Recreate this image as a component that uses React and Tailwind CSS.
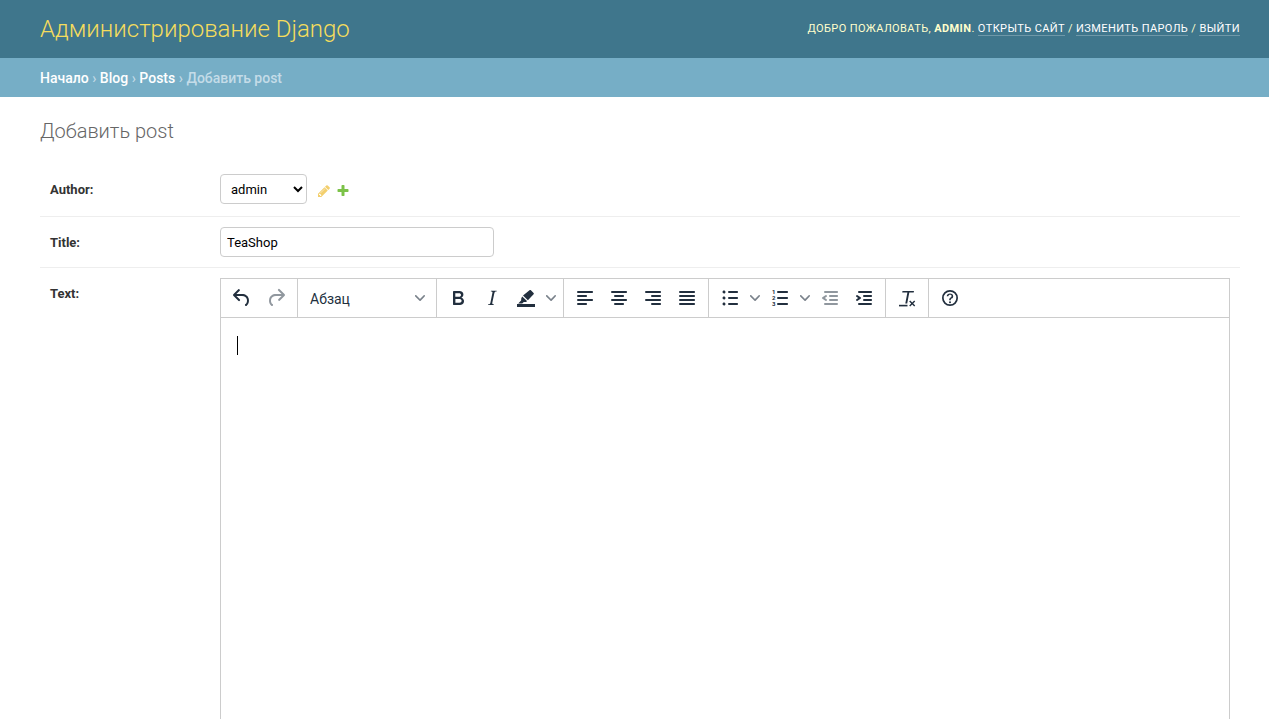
import React from "react";

const Icon = ({ d, className = "", children }) => (
  <svg width="24" height="24" viewBox="0 0 24 24" className={className} fill="currentColor">
    {d && <path d={d} />}
    {children}
  </svg>
);

const Chevron = ({ className = "" }) => (
  <svg width="10" height="10" viewBox="0 0 10 10" className={className} fill="currentColor">
    <path d="M8.7 2.2c.3-.3.8-.3 1 0 .4.4.4.9 0 1.2L5.7 7.8c-.3.3-.9.3-1.2 0L.2 3.4a.8.8 0 0 1 0-1.2c.3-.3.8-.3 1.1 0L5 6l3.7-3.8Z" />
  </svg>
);

const paths = {
  undo: "M6.4 8H12c3.7 0 6.2 2 6.8 5.1.6 2.7-.4 5.6-2.3 6.8a1 1 0 0 1-1-1.8c1.1-.6 1.8-2.7 1.4-4.6-.5-2.1-2.1-3.5-4.9-3.5H6.4l3.3 3.3a1 1 0 1 1-1.4 1.4l-5-5a1 1 0 0 1 0-1.4l5-5a1 1 0 0 1 1.4 1.4L6.4 8Z",
  redo: "M17.6 10H12c-2.8 0-4.4 1.4-4.9 3.5-.4 2 .3 4 1.4 4.6a1 1 0 1 1-1 1.8c-2-1.2-2.9-4.1-2.3-6.8.6-3 3-5.1 6.8-5.1h5.6l-3.3-3.3a1 1 0 1 1 1.4-1.4l5 5a1 1 0 0 1 0 1.4l-5 5a1 1 0 0 1-1.4-1.4l3.3-3.3Z",
  bold: "M7.8 19c-.3 0-.5 0-.6-.2l-.2-.5V5.7c0-.2 0-.4.2-.5l.6-.2h5c1.5 0 2.7.3 3.5 1 .7.6 1.1 1.4 1.1 2.5a3 3 0 0 1-.6 1.9c-.4.6-1 1-1.6 1.2.4.1.9.3 1.3.6s.8.7 1 1.2c.4.4.5 1 .5 1.6 0 1.3-.4 2.3-1.3 3-.8.7-2.1 1-3.8 1H7.8Zm5-8.3c.6 0 1.2-.1 1.6-.5.4-.3.6-.7.6-1.3 0-1.1-.8-1.7-2.3-1.7H9.3v3.5h3.4Zm.5 6c.7 0 1.3-.1 1.7-.4.4-.4.6-.9.6-1.5s-.2-1-.7-1.4c-.4-.3-1-.4-2-.4H9.4v3.8h4Z",
  italic: "m16.7 4.7-.1.9h-.3c-.6 0-1 0-1.4.3-.3.3-.4.6-.5 1.1l-2.1 9.8v.6c0 .5.4.8 1.4.8h.2l-.2.8H8l.2-.8h.2c1.1 0 1.8-.5 2-1.5l2-9.8.1-.5c0-.6-.4-.8-1.4-.8h-.3l.2-.9h5.8Z",
  left: "M5 5h14c.6 0 1 .4 1 1s-.4 1-1 1H5a1 1 0 1 1 0-2Zm0 4h8c.6 0 1 .4 1 1s-.4 1-1 1H5a1 1 0 1 1 0-2Zm0 8h8c.6 0 1 .4 1 1s-.4 1-1 1H5a1 1 0 0 1 0-2Zm0-4h14c.6 0 1 .4 1 1s-.4 1-1 1H5a1 1 0 0 1 0-2Z",
  center: "M5 5h14c.6 0 1 .4 1 1s-.4 1-1 1H5a1 1 0 1 1 0-2Zm3 4h8c.6 0 1 .4 1 1s-.4 1-1 1H8a1 1 0 1 1 0-2Zm0 8h8c.6 0 1 .4 1 1s-.4 1-1 1H8a1 1 0 0 1 0-2Zm-3-4h14c.6 0 1 .4 1 1s-.4 1-1 1H5a1 1 0 0 1 0-2Z",
  right: "M5 5h14c.6 0 1 .4 1 1s-.4 1-1 1H5a1 1 0 1 1 0-2Zm6 4h8c.6 0 1 .4 1 1s-.4 1-1 1h-8a1 1 0 0 1 0-2Zm0 8h8c.6 0 1 .4 1 1s-.4 1-1 1h-8a1 1 0 0 1 0-2Zm-6-4h14c.6 0 1 .4 1 1s-.4 1-1 1H5a1 1 0 0 1 0-2Z",
  justify: "M5 5h14c.6 0 1 .4 1 1s-.4 1-1 1H5a1 1 0 1 1 0-2Zm0 4h14c.6 0 1 .4 1 1s-.4 1-1 1H5a1 1 0 1 1 0-2Zm0 4h14c.6 0 1 .4 1 1s-.4 1-1 1H5a1 1 0 0 1 0-2Zm0 4h14c.6 0 1 .4 1 1s-.4 1-1 1H5a1 1 0 0 1 0-2Z",
  bullets: "M11 5h8c.6 0 1 .4 1 1s-.4 1-1 1h-8a1 1 0 0 1 0-2Zm0 6h8c.6 0 1 .4 1 1s-.4 1-1 1h-8a1 1 0 0 1 0-2Zm0 6h8c.6 0 1 .4 1 1s-.4 1-1 1h-8a1 1 0 0 1 0-2ZM4.5 6c0-.4.1-.8.4-1 .3-.4.7-.5 1.1-.5.4 0 .8.1 1 .4.4.3.5.7.5 1.1 0 .4-.1.8-.4 1-.3.4-.7.5-1.1.5-.4 0-.8-.1-1-.4-.4-.3-.5-.7-.5-1.1Zm0 6c0-.4.1-.8.4-1 .3-.4.7-.5 1.1-.5.4 0 .8.1 1 .4.4.3.5.7.5 1.1 0 .4-.1.8-.4 1-.3.4-.7.5-1.1.5-.4 0-.8-.1-1-.4-.4-.3-.5-.7-.5-1.1Zm0 6c0-.4.1-.8.4-1 .3-.4.7-.5 1.1-.5.4 0 .8.1 1 .4.4.3.5.7.5 1.1 0 .4-.1.8-.4 1-.3.4-.7.5-1.1.5-.4 0-.8-.1-1-.4-.4-.3-.5-.7-.5-1.1Z",
  numberLines: "M10 5h9c.6 0 1 .4 1 1s-.4 1-1 1h-9a1 1 0 0 1 0-2Zm0 6h9c.6 0 1 .4 1 1s-.4 1-1 1h-9a1 1 0 0 1 0-2Zm0 6h9c.6 0 1 .4 1 1s-.4 1-1 1h-9a1 1 0 0 1 0-2Z",
  outdent: "M7 5h12c.6 0 1 .4 1 1s-.4 1-1 1H7a1 1 0 1 1 0-2Zm5 4h7c.6 0 1 .4 1 1s-.4 1-1 1h-7a1 1 0 0 1 0-2Zm0 4h7c.6 0 1 .4 1 1s-.4 1-1 1h-7a1 1 0 0 1 0-2Zm-5 4h12a1 1 0 0 1 0 2H7a1 1 0 0 1 0-2Zm1.6-3.8a1 1 0 0 1-1.2 1.6l-3-2a1 1 0 0 1 0-1.6l3-2a1 1 0 0 1 1.2 1.6L6.8 12l1.8 1.2Z",
  indent: "M7 5h12c.6 0 1 .4 1 1s-.4 1-1 1H7a1 1 0 1 1 0-2Zm5 4h7c.6 0 1 .4 1 1s-.4 1-1 1h-7a1 1 0 0 1 0-2Zm0 4h7c.6 0 1 .4 1 1s-.4 1-1 1h-7a1 1 0 0 1 0-2Zm-5 4h12a1 1 0 0 1 0 2H7a1 1 0 0 1 0-2Zm-2.6-3.8L6.2 12l-1.8-1.2a1 1 0 0 1 1.2-1.6l3 2a1 1 0 0 1 0 1.6l-3 2a1 1 0 1 1-1.2-1.6Z",
};

const Btn = ({ name, dim }) => (
  <div className={`w-[34px] h-[34px] flex items-center justify-center ${dim ? "text-[#222f3e80]" : "text-[#222f3e]"}`}>
    <Icon d={paths[name]} />
  </div>
);

const Split = ({ children }) => (
  <div className="w-[50px] h-[34px] flex items-center text-[#222f3e]">
    <div className="w-[34px] flex justify-center">{children}</div>
    <Chevron className="ml-[3px] text-[#222f3e99]" />
  </div>
);

const Group = ({ children, last }) => (
  <div className={`flex items-center px-1 h-full ${last ? "" : "border-r border-[#cccccc]"}`}>{children}</div>
);

export default function App() {
  return (
    <div className="h-screen overflow-hidden bg-white text-[#333] font-['Roboto',sans-serif]">
      <header className="h-[58px] bg-[#3f768c] pl-10 pr-[29px] flex items-center justify-between">
        <h1 className="text-2xl font-light text-[#f5dd5d]">Администрирование Django</h1>
        <div className="text-[11px] uppercase tracking-[0.4px] text-[#ffffcc]">
          Добро пожаловать, <strong className="font-bold text-[#ffc]">admin</strong>.{" "}
          <a className="text-white border-b border-white/25">Открыть сайт</a> /{" "}
          <a className="text-white border-b border-white/25">Изменить пароль</a> /{" "}
          <a className="text-white border-b border-white/25">Выйти</a>
        </div>
      </header>
      <nav className="h-[39px] bg-[#76aec6] px-10 flex items-center text-sm text-[#c4dce8] font-medium">
        <span className="text-white">Начало</span>
        <span>&nbsp;›&nbsp;</span>
        <span className="text-white">Blog</span>
        <span>&nbsp;›&nbsp;</span>
        <span className="text-white">Posts</span>
        <span>&nbsp;›&nbsp;</span>
        <span>Добавить post</span>
      </nav>
      <main className="pl-10 pr-[29px] pt-5">
        <h2 className="text-xl font-light text-[#666] leading-7 mb-[27px]">Добавить post</h2>

        <div className="flex items-center px-2.5 pt-[2px] pb-3 border-b border-[#eeeeee]">
          <label className="w-[170px] pt-[2px] text-[13px] font-bold">Author:</label>
          <select className="w-[87px] h-[30px] pl-1.5 pt-[1px] border border-[#cccccc] rounded bg-white text-[13px] text-black">
            <option>admin</option>
          </select>
          <svg width="14" height="14" viewBox="0 0 1792 1792" className="ml-[10px] mt-[4px]" fill="#f3cf6d">
            <path d="M491 1536l91-91-235-235-91 91v107h128v128h107zm523-928q0-22-22-22-10 0-17 7l-542 542q-7 7-7 17 0 22 22 22 10 0 17-7l542-542q7-7 7-17zm-54-192l416 416-832 832h-416v-416zm683 96q0 53-37 90l-166 166-416-416 166-165q36-38 90-38 53 0 91 38l235 234q37 39 37 91z" />
          </svg>
          <svg width="14" height="14" viewBox="0 0 1792 1792" className="ml-[5px] mt-[4px]" fill="#7cc248">
            <path d="M1600 736v192q0 40-28 68t-68 28h-416v416q0 40-28 68t-68 28h-192q-40 0-68-28t-28-68v-416h-416q-40 0-68-28t-28-68v-192q0-40 28-68t68-28h416v-416q0-40 28-68t68-28h192q40 0 68 28t28 68v416h416q40 0 68 28t28 68z" />
          </svg>
        </div>

        <div className="flex items-center p-2.5 border-b border-[#eeeeee]">
          <label className="w-[170px] pt-[2px] text-[13px] font-bold">Title:</label>
          <input
            readOnly
            value="TeaShop"
            className="w-[274px] h-[30px] px-1.5 border border-[#cccccc] rounded text-[13px] text-black"
          />
        </div>

        <div className="flex items-start p-2.5">
          <label className="w-[170px] pt-[6px] text-[13px] font-bold leading-5">Text:</label>
          <div className="flex-1 h-[500px] border border-[#cccccc]">
            <div className="h-[39px] flex items-center border-b border-[#cccccc]">
              <Group>
                <Btn name="undo" />
                <Btn name="redo" dim />
              </Group>
              <Group>
                <div className="w-[130px] h-[34px] flex items-center justify-between pl-2 pr-[7px] text-sm text-[#222f3e]">
                  <span className="pt-[2px]">Абзац</span>
                  <Chevron className="text-[#222f3e99]" />
                </div>
              </Group>
              <Group>
                <Btn name="bold" />
                <Btn name="italic" />
                <Split>
                  <Icon>
                    <path d="M3 18h18v3H3z" />
                    <path d="M15.5 4.3c.4-.4 1-.4 1.4 0l2.7 2.6c.4.4.4 1 0 1.4l-5.7 5.9-4.9-4.6 6.5-5.3Z" />
                    <path d="m8.2 10.6 4.8 4.5-.8.8-2.4.2-1.6 1.5H4.2l2.9-3 .2-2.3.9-1.7Z" />
                  </Icon>
                </Split>
              </Group>
              <Group>
                <Btn name="left" />
                <Btn name="center" />
                <Btn name="right" />
                <Btn name="justify" />
              </Group>
              <Group>
                <Split>
                  <Icon d={paths.bullets} />
                </Split>
                <Split>
                  <Icon d={paths.numberLines}>
                    <text x="4" y="8.2" fontSize="6" fontWeight="700" fontFamily="Roboto, sans-serif">1</text>
                    <text x="4" y="14.2" fontSize="6" fontWeight="700" fontFamily="Roboto, sans-serif">2</text>
                    <text x="4" y="20.2" fontSize="6" fontWeight="700" fontFamily="Roboto, sans-serif">3</text>
                  </Icon>
                </Split>
                <Btn name="outdent" dim />
                <Btn name="indent" />
              </Group>
              <Group>
                <div className="w-[34px] h-[34px] flex items-center justify-center text-[#222f3e]">
                  <Icon>
                    <path d="M7.5 5H19l-.3 1.6h-4.4l-2.1 10.9h-1.9l2.1-10.9H7.2L7.5 5Z" />
                    <path d="M4 18.8h8.5v1.6H4z" />
                    <path d="m15.2 14.6 2 2 2-2 1 1-2 2 2 2-1 1-2-2-2 2-1-1 2-2-2-2 1-1Z" />
                  </Icon>
                </div>
              </Group>
              <Group last>
                <div className="w-[34px] h-[34px] flex items-center justify-center text-[#222f3e]">
                  <Icon>
                    <path d="M12 4a8 8 0 1 1 0 16 8 8 0 0 1 0-16Zm0 1.7a6.3 6.3 0 1 0 0 12.6 6.3 6.3 0 0 0 0-12.6Z" />
                    <path d="M12 7.5c1.9 0 3.2 1.1 3.2 2.7 0 1.1-.5 1.8-1.5 2.4-.8.5-.9.7-.9 1.3v.3h-1.6v-.5c0-1 .4-1.6 1.4-2.2.7-.5 1-.8 1-1.4 0-.8-.7-1.3-1.6-1.3-1 0-1.6.6-1.7 1.5H8.7C8.8 8.7 10.1 7.5 12 7.5ZM12 15.3a1 1 0 1 1 0 2 1 1 0 0 1 0-2Z" />
                  </Icon>
                </div>
              </Group>
            </div>
            <div className="pl-4 pt-[18px]">
              <div className="w-px h-[19px] bg-black" />
            </div>
          </div>
        </div>
      </main>
    </div>
  );
}
